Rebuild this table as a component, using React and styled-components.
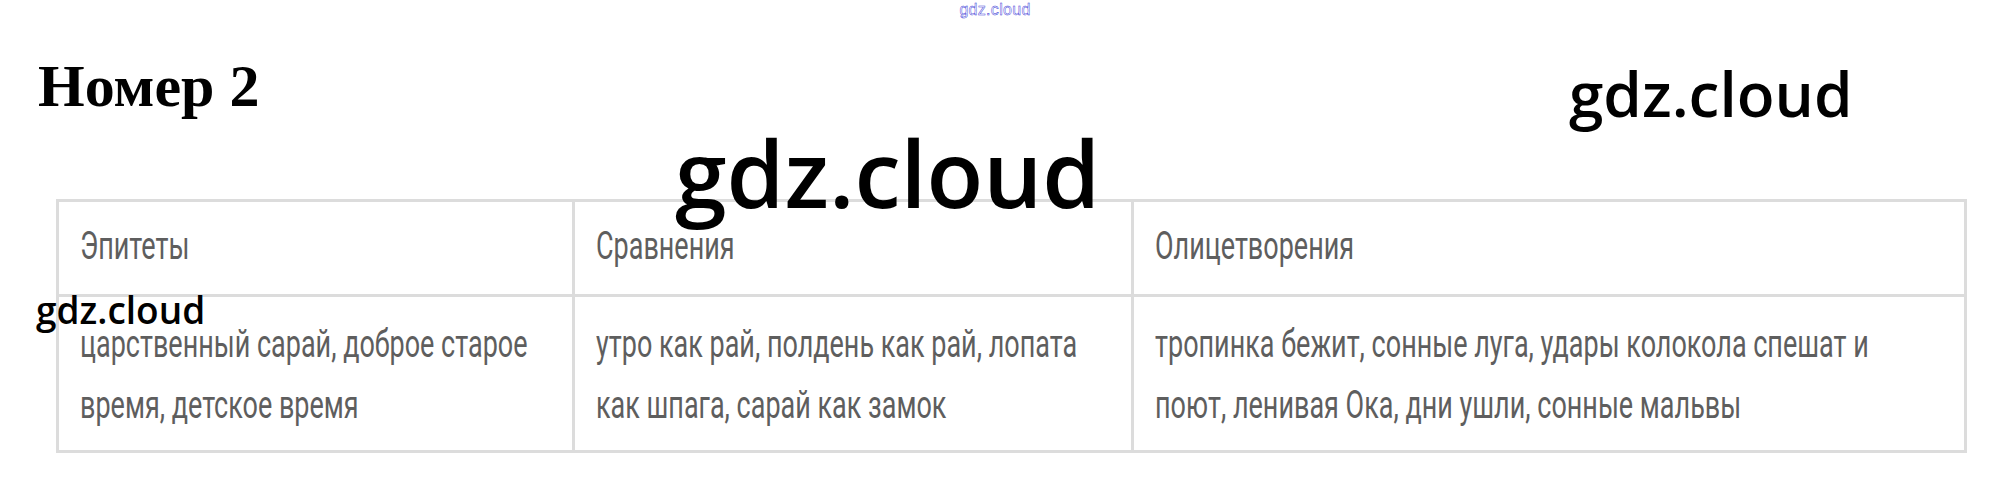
import React from "react";
import styled, { createGlobalStyle } from "styled-components";

const GlobalStyle = createGlobalStyle`
  html, body {
    margin: 0;
    padding: 0;
    background: #ffffff;
  }
`;

const columns = [
  {
    title: "Эпитеты",
    lines: ["царственный сарай, доброе старое", "время, детское время"],
  },
  {
    title: "Сравнения",
    lines: ["утро как рай, полдень как рай, лопата", "как шпага, сарай как замок"],
  },
  {
    title: "Олицетворения",
    lines: [
      "тропинка бежит, сонные луга, удары колокола спешат и",
      "поют, ленивая Ока, дни ушли, сонные мальвы",
    ],
  },
];

export default function App() {
  return (
    <Page>
      <GlobalStyle />
      <TopMark>gdz.cloud</TopMark>

      <Heading>Номер 2</Heading>

      <Table>
        {columns.map((col) => (
          <HeadCell key={col.title}>
            <Line>{col.title}</Line>
          </HeadCell>
        ))}
        {columns.map((col) => (
          <BodyCell key={col.title + "-body"}>
            {col.lines.map((line) => (
              <Line key={line}>{line}</Line>
            ))}
          </BodyCell>
        ))}
      </Table>

      <Mark size={93} top={126} left={675}>
        gdz.cloud
      </Mark>
      <Mark size={62} top={62} left={1569}>
        gdz.cloud
      </Mark>
      <Mark size={37} top={291} left={36}>
        gdz.cloud
      </Mark>
    </Page>
  );
}

const Page = styled.div`
  position: relative;
  width: 1990px;
  height: 490px;
  overflow: hidden;
  background: #ffffff;
`;

const TopMark = styled.div`
  position: absolute;
  top: 2px;
  left: 50%;
  transform: translateX(-50%);
  font-family: "Liberation Sans", Arial, sans-serif;
  font-size: 16px;
  letter-spacing: 0.3px;
  line-height: 1;
  color: #ffffff;
  -webkit-text-stroke: 0.45px #3434d6;
`;

const Heading = styled.h2`
  margin: 0;
  padding: 56px 0 0 38px;
  height: 199px;
  box-sizing: border-box;
  font-family: "Liberation Serif", "Times New Roman", serif;
  font-weight: 700;
  font-size: 60px;
  line-height: 60px;
  color: #000000;
`;

const Table = styled.div`
  margin-left: 56px;
  width: 1911px;
  box-sizing: border-box;
  display: grid;
  grid-template-columns: 513px 556px 830px;
  grid-template-rows: 92px 153px;
  gap: 3px;
  padding: 3px;
  background: #dcdcdc;
`;

const Cell = styled.div`
  background: #ffffff;
  min-width: 0;
  padding-left: 21px;
  display: flex;
  flex-direction: column;
  justify-content: center;
  font-family: Roboto, "Liberation Sans", sans-serif;
  font-size: 38px;
  color: #5e5e5e;
`;

const HeadCell = styled(Cell)`
  line-height: 44px;
  padding-bottom: 4px;
`;

const BodyCell = styled(Cell)`
  line-height: 61px;
  padding-top: 2px;
`;

const Line = styled.span`
  display: block;
  white-space: nowrap;
  transform: scaleX(0.71);
  transform-origin: left center;
`;

const Mark = styled.div`
  position: absolute;
  top: ${(p) => p.top}px;
  left: ${(p) => p.left}px;
  font-family: "Open Sans", sans-serif;
  font-weight: 600;
  font-size: ${(p) => p.size}px;
  line-height: 1;
  color: #000000;
  white-space: nowrap;
`;
